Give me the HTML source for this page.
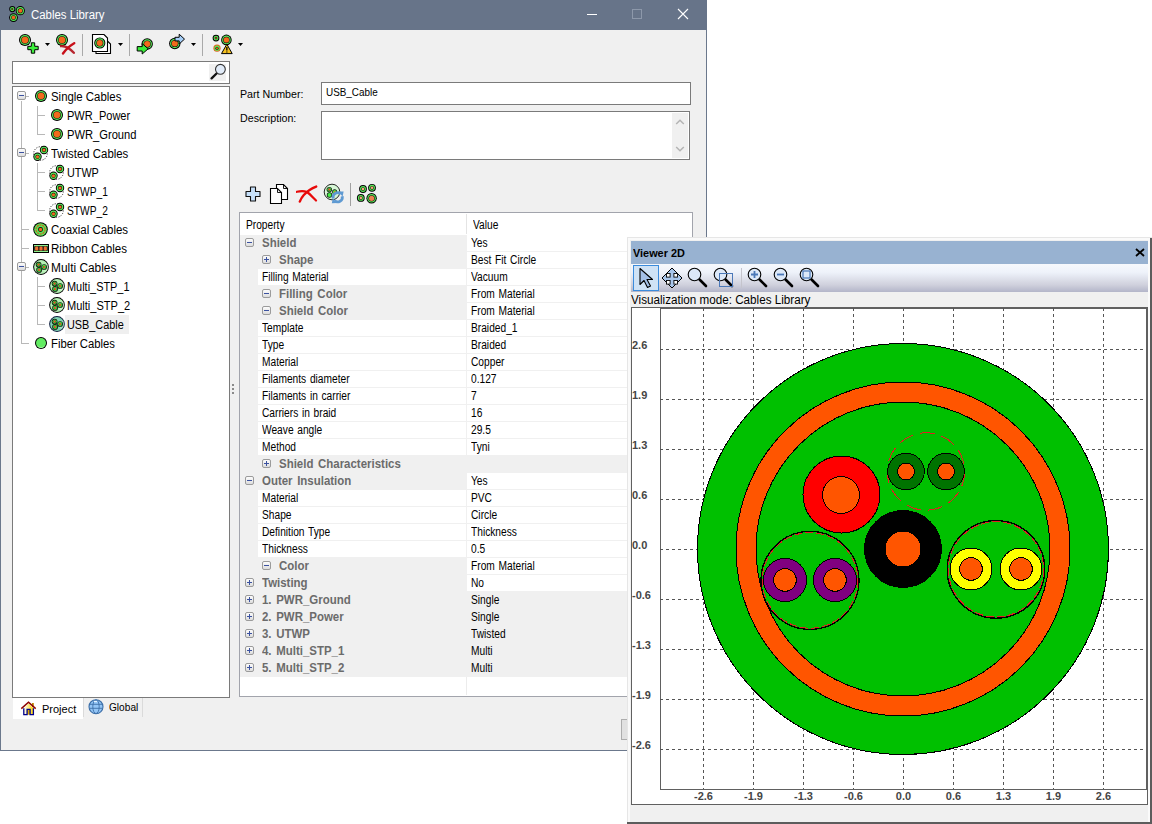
<!DOCTYPE html><html><head><meta charset="utf-8"><title>Cables Library</title><style>
html,body{margin:0;padding:0} body{width:1152px;height:824px;position:relative;overflow:hidden;background:#fff;font-family:"Liberation Sans", sans-serif}
</style></head><body>
<div style="position:absolute;left:0px;top:30px;width:707px;height:721px;background:#6b788c;"></div>
<div style="position:absolute;left:1px;top:30px;width:705px;height:720px;background:#f0f0f0;"></div>
<div style="position:absolute;left:0px;top:0px;width:707px;height:30px;background:#677489;"></div>
<svg style="position:absolute;left:8px;top:5px" width="18" height="18" viewBox="0 0 18 18"><circle cx="4.3" cy="4.1" r="3.1" fill="#000"/><circle cx="4.3" cy="4.1" r="2.15" fill="#58ea58"/><circle cx="4.3" cy="4.1" r="1.05" fill="#111"/><circle cx="4.3" cy="4.1" r="0.50" fill="#f26a1b"/><circle cx="12.3" cy="5.7" r="4.6" fill="#000"/><circle cx="12.3" cy="5.7" r="3.65" fill="#58ea58"/><circle cx="12.3" cy="5.7" r="2.55" fill="#111"/><circle cx="12.3" cy="5.7" r="2.00" fill="#f26a1b"/><circle cx="5.5" cy="12.6" r="4.4" fill="#000"/><circle cx="5.5" cy="12.6" r="3.45" fill="#58ea58"/><circle cx="5.5" cy="12.6" r="2.35" fill="#111"/><circle cx="5.5" cy="12.6" r="1.80" fill="#f26a1b"/></svg>
<div style="position:absolute;left:30.5px;top:9.24px;font-size:12px;line-height:12px;color:#fff;font-weight:normal;white-space:nowrap;transform:scaleX(0.95);transform-origin:0 0;">Cables Library</div>
<div style="position:absolute;left:587px;top:14px;width:10px;height:1px;background:#fff;"></div>
<div style="position:absolute;left:632px;top:9px;width:8px;height:8px;border:1px solid #8d98aa"></div>
<svg style="position:absolute;left:677px;top:8px" width="12" height="12" viewBox="0 0 12 12"><path d="M1 1L11 11M11 1L1 11" stroke="#fff" stroke-width="1.1"/></svg>
<svg style="position:absolute;left:19px;top:34px" width="12" height="12" viewBox="0 0 12 12"><circle cx="6" cy="6" r="6" fill="#000"/><circle cx="6" cy="6" r="5.05" fill="#58ea58"/><circle cx="6" cy="6" r="3.85" fill="#111"/><circle cx="6" cy="6" r="3.30" fill="#f26a1b"/></svg>
<svg style="position:absolute;left:27px;top:42px" width="12" height="12" viewBox="0 0 12 12"><path d="M4.3 0.8h3.4v3.5h3.5v3.4H7.7v3.5H4.3V7.7H0.8V4.3h3.5z" fill="#3cf03c" stroke="#000" stroke-width="1" stroke-linejoin="round"/></svg>
<svg style="position:absolute;left:45px;top:43px" width="5" height="3" viewBox="0 0 5 3"><path d="M0 0H5L2.5 3z" fill="#000"/></svg>
<svg style="position:absolute;left:56px;top:34px" width="12" height="12" viewBox="0 0 12 12"><circle cx="6" cy="6" r="6" fill="#000"/><circle cx="6" cy="6" r="5.05" fill="#58ea58"/><circle cx="6" cy="6" r="3.85" fill="#111"/><circle cx="6" cy="6" r="3.30" fill="#f26a1b"/></svg>
<svg style="position:absolute;left:60px;top:42px" width="16" height="13" viewBox="0 0 16 13"><path d="M0.5 4C5 3.5 9 5.5 13.8 10.8" stroke="#b0101a" stroke-width="2.4" fill="none" stroke-linecap="round" opacity="0.9"/><path d="M14.2 1.2C10 3.5 6.5 6.5 3 11.5" stroke="#c8101a" stroke-width="2.4" fill="none" stroke-linecap="round"/></svg>
<div style="position:absolute;left:82px;top:34px;width:1px;height:22px;background:#a9a9a9;"></div>
<svg style="position:absolute;left:91px;top:34px" width="21" height="21" viewBox="0 0 21 21"><path d="M5 3.5h8l6.5 6.5v9.5H5z" fill="#fff" stroke="#000" stroke-width="1.1"/><path d="M1.5 0.5h11.5l3.5 3.5v13.5h-15z" fill="#fff" stroke="#000" stroke-width="1.1"/><circle cx="8.8" cy="9" r="5.6" fill="#000"/><circle cx="8.8" cy="9" r="4.65" fill="#58ea58"/><circle cx="8.8" cy="9" r="3.53" fill="#111"/><circle cx="8.8" cy="9" r="2.98" fill="#f26a1b"/></svg>
<svg style="position:absolute;left:118px;top:43px" width="5" height="3" viewBox="0 0 5 3"><path d="M0 0H5L2.5 3z" fill="#000"/></svg>
<div style="position:absolute;left:129px;top:34px;width:1px;height:22px;background:#a9a9a9;"></div>
<svg style="position:absolute;left:136px;top:34px" width="20" height="22" viewBox="0 0 20 22"><circle cx="11.2" cy="10" r="5.7" fill="#000"/><circle cx="11.2" cy="10" r="4.75" fill="#58ea58"/><circle cx="11.2" cy="10" r="3.61" fill="#111"/><circle cx="11.2" cy="10" r="3.06" fill="#f26a1b"/><path d="M1.2 12.6h5v-3l6 5.2-6 5.2v-3h-5z" fill="#38ec38" stroke="#000" stroke-width="1" stroke-linejoin="round"/></svg>
<svg style="position:absolute;left:168px;top:33px" width="20" height="20" viewBox="0 0 20 20"><circle cx="6.8" cy="10.5" r="5.7" fill="#000"/><circle cx="6.8" cy="10.5" r="4.75" fill="#58ea58"/><circle cx="6.8" cy="10.5" r="3.61" fill="#111"/><circle cx="6.8" cy="10.5" r="3.06" fill="#f26a1b"/><path d="M7 4.3h4.2V1.2l5.3 4.9-5.3 4.9V7.9H7z" fill="#a4cdf6" stroke="#000" stroke-width="1" stroke-linejoin="round"/></svg>
<svg style="position:absolute;left:191px;top:43px" width="5" height="3" viewBox="0 0 5 3"><path d="M0 0H5L2.5 3z" fill="#000"/></svg>
<div style="position:absolute;left:202px;top:34px;width:1px;height:22px;background:#a9a9a9;"></div>
<svg style="position:absolute;left:211px;top:33px" width="22" height="22" viewBox="0 0 22 22"><circle cx="5" cy="5.1" r="3.4" fill="#000"/><circle cx="5" cy="5.1" r="2.45" fill="#58ea58"/><circle cx="5" cy="5.1" r="1.35" fill="#111"/><circle cx="5" cy="5.1" r="0.80" fill="#f26a1b"/><circle cx="6" cy="15.2" r="3.6" fill="#e0601a"/><circle cx="6" cy="15.2" r="2.65" fill="#58ea58"/><circle cx="6" cy="15.2" r="1.55" fill="#111"/><circle cx="6" cy="15.2" r="1.00" fill="#f26a1b"/><circle cx="15.4" cy="6.9" r="5.3" fill="#000"/><circle cx="15.4" cy="6.9" r="4.35" fill="#58ea58"/><circle cx="15.4" cy="6.9" r="3.25" fill="#111"/><circle cx="15.4" cy="6.9" r="2.70" fill="#f26a1b"/><path d="M15.85 11.2L21.2 20.6H10.5z" fill="#f5c020" stroke="#000" stroke-width="1" stroke-linejoin="round"/><path d="M15.85 14v3.4M15.85 18.4v1" stroke="#000" stroke-width="1.3"/></svg>
<svg style="position:absolute;left:238px;top:43px" width="5" height="3" viewBox="0 0 5 3"><path d="M0 0H5L2.5 3z" fill="#000"/></svg>
<div style="position:absolute;left:12px;top:61px;width:216px;height:21px;border:1px solid #7a7a7a;background:#fff"></div>
<div style="position:absolute;left:209px;top:64px;width:17px;height:17px;background:#f0f0f0;"></div>
<svg style="position:absolute;left:209px;top:62px" width="18" height="18" viewBox="0 0 18 18"><path d="M2.6 16.4L7.8 11.2" stroke="#111" stroke-width="2.3" stroke-linecap="round"/><circle cx="11.4" cy="7.3" r="4.9" fill="#e2ecf9" stroke="#333" stroke-width="1.1"/></svg>
<div style="position:absolute;left:12px;top:86px;width:216px;height:610px;border:1px solid #7a7a7a;background:#fff"></div>
<div style="position:absolute;left:21px;top:101px;width:1px;height:243px;background:#b8b8b8;"></div>
<div style="position:absolute;left:26px;top:96px;width:3px;height:1px;background:#b8b8b8;"></div>
<div style="position:absolute;left:26px;top:153px;width:3px;height:1px;background:#b8b8b8;"></div>
<div style="position:absolute;left:26px;top:267px;width:3px;height:1px;background:#b8b8b8;"></div>
<div style="position:absolute;left:22px;top:229px;width:7px;height:1px;background:#b8b8b8;"></div>
<div style="position:absolute;left:22px;top:248px;width:7px;height:1px;background:#b8b8b8;"></div>
<div style="position:absolute;left:22px;top:343px;width:7px;height:1px;background:#b8b8b8;"></div>
<div style="position:absolute;left:37px;top:106px;width:1px;height:29px;background:#b8b8b8;"></div>
<div style="position:absolute;left:38px;top:115px;width:7px;height:1px;background:#b8b8b8;"></div>
<div style="position:absolute;left:38px;top:134px;width:7px;height:1px;background:#b8b8b8;"></div>
<div style="position:absolute;left:37px;top:163px;width:1px;height:48px;background:#b8b8b8;"></div>
<div style="position:absolute;left:38px;top:172px;width:7px;height:1px;background:#b8b8b8;"></div>
<div style="position:absolute;left:38px;top:191px;width:7px;height:1px;background:#b8b8b8;"></div>
<div style="position:absolute;left:38px;top:210px;width:7px;height:1px;background:#b8b8b8;"></div>
<div style="position:absolute;left:37px;top:277px;width:1px;height:48px;background:#b8b8b8;"></div>
<div style="position:absolute;left:38px;top:286px;width:7px;height:1px;background:#b8b8b8;"></div>
<div style="position:absolute;left:38px;top:305px;width:7px;height:1px;background:#b8b8b8;"></div>
<div style="position:absolute;left:38px;top:324px;width:7px;height:1px;background:#b8b8b8;"></div>
<div style="position:absolute;left:17px;top:91px;width:7px;height:7px;border:1px solid #9b9b9b;border-radius:2px;background:linear-gradient(#fcfcfc,#dcdcdc)"><div style="position:absolute;left:1px;top:3px;width:5px;height:1px;background:#3b52a0"></div></div>
<div style="position:absolute;left:17px;top:148px;width:7px;height:7px;border:1px solid #9b9b9b;border-radius:2px;background:linear-gradient(#fcfcfc,#dcdcdc)"><div style="position:absolute;left:1px;top:3px;width:5px;height:1px;background:#3b52a0"></div></div>
<div style="position:absolute;left:17px;top:262px;width:7px;height:7px;border:1px solid #9b9b9b;border-radius:2px;background:linear-gradient(#fcfcfc,#dcdcdc)"><div style="position:absolute;left:1px;top:3px;width:5px;height:1px;background:#3b52a0"></div></div>
<svg style="position:absolute;left:35px;top:90px" width="12" height="12" viewBox="0 0 12 12"><circle cx="6" cy="6" r="6" fill="#000"/><circle cx="6" cy="6" r="5.05" fill="#58ea58"/><circle cx="6" cy="6" r="3.85" fill="#111"/><circle cx="6" cy="6" r="3.30" fill="#f26a1b"/></svg>
<div style="position:absolute;left:51px;top:91.24px;font-size:12px;line-height:12px;color:#000;font-weight:normal;white-space:nowrap;transform:scaleX(0.95);transform-origin:0 0;">Single Cables</div>
<svg style="position:absolute;left:51px;top:109px" width="12" height="12" viewBox="0 0 12 12"><circle cx="6" cy="6" r="6" fill="#000"/><circle cx="6" cy="6" r="5.05" fill="#58ea58"/><circle cx="6" cy="6" r="3.85" fill="#111"/><circle cx="6" cy="6" r="3.30" fill="#f26a1b"/></svg>
<div style="position:absolute;left:67px;top:110.24px;font-size:12px;line-height:12px;color:#000;font-weight:normal;white-space:nowrap;transform:scaleX(0.92);transform-origin:0 0;">PWR_Power</div>
<svg style="position:absolute;left:51px;top:128px" width="12" height="12" viewBox="0 0 12 12"><circle cx="6" cy="6" r="6" fill="#000"/><circle cx="6" cy="6" r="5.05" fill="#58ea58"/><circle cx="6" cy="6" r="3.85" fill="#111"/><circle cx="6" cy="6" r="3.30" fill="#f26a1b"/></svg>
<div style="position:absolute;left:67px;top:129.24px;font-size:12px;line-height:12px;color:#000;font-weight:normal;white-space:nowrap;transform:scaleX(0.93);transform-origin:0 0;">PWR_Ground</div>
<svg style="position:absolute;left:33px;top:145px" width="17" height="17" viewBox="0 0 17 17"><circle cx="7.5" cy="8.5" r="6.8" fill="none" stroke="#000" stroke-width="0.9" stroke-dasharray="1 1.5"/><circle cx="11" cy="5" r="4.2" fill="#000"/><circle cx="11" cy="5" r="3.25" fill="#58ea58"/><circle cx="11" cy="5" r="2.15" fill="#111"/><circle cx="11" cy="5" r="1.60" fill="#f26a1b"/><circle cx="4.5" cy="11.8" r="4.2" fill="#000"/><circle cx="4.5" cy="11.8" r="3.25" fill="#58ea58"/><circle cx="4.5" cy="11.8" r="2.15" fill="#111"/><circle cx="4.5" cy="11.8" r="1.60" fill="#f26a1b"/></svg>
<div style="position:absolute;left:51px;top:148.24px;font-size:12px;line-height:12px;color:#000;font-weight:normal;white-space:nowrap;transform:scaleX(0.95);transform-origin:0 0;">Twisted Cables</div>
<svg style="position:absolute;left:49px;top:164px" width="17" height="17" viewBox="0 0 17 17"><circle cx="7.5" cy="8.5" r="6.8" fill="none" stroke="#000" stroke-width="0.9" stroke-dasharray="1 1.5"/><circle cx="11" cy="5" r="4.2" fill="#000"/><circle cx="11" cy="5" r="3.25" fill="#58ea58"/><circle cx="11" cy="5" r="2.15" fill="#111"/><circle cx="11" cy="5" r="1.60" fill="#f26a1b"/><circle cx="4.5" cy="11.8" r="4.2" fill="#000"/><circle cx="4.5" cy="11.8" r="3.25" fill="#58ea58"/><circle cx="4.5" cy="11.8" r="2.15" fill="#111"/><circle cx="4.5" cy="11.8" r="1.60" fill="#f26a1b"/></svg>
<div style="position:absolute;left:67px;top:167.24px;font-size:12px;line-height:12px;color:#000;font-weight:normal;white-space:nowrap;transform:scaleX(0.9);transform-origin:0 0;">UTWP</div>
<svg style="position:absolute;left:49px;top:183px" width="17" height="17" viewBox="0 0 17 17"><circle cx="7.5" cy="8.5" r="6.8" fill="none" stroke="#000" stroke-width="0.9" stroke-dasharray="1 1.5"/><circle cx="11" cy="5" r="4.2" fill="#000"/><circle cx="11" cy="5" r="3.25" fill="#58ea58"/><circle cx="11" cy="5" r="2.15" fill="#111"/><circle cx="11" cy="5" r="1.60" fill="#f26a1b"/><circle cx="4.5" cy="11.8" r="4.2" fill="#000"/><circle cx="4.5" cy="11.8" r="3.25" fill="#58ea58"/><circle cx="4.5" cy="11.8" r="2.15" fill="#111"/><circle cx="4.5" cy="11.8" r="1.60" fill="#f26a1b"/></svg>
<div style="position:absolute;left:67px;top:186.24px;font-size:12px;line-height:12px;color:#000;font-weight:normal;white-space:nowrap;transform:scaleX(0.85);transform-origin:0 0;">STWP_1</div>
<svg style="position:absolute;left:49px;top:202px" width="17" height="17" viewBox="0 0 17 17"><circle cx="7.5" cy="8.5" r="6.8" fill="none" stroke="#000" stroke-width="0.9" stroke-dasharray="1 1.5"/><circle cx="11" cy="5" r="4.2" fill="#000"/><circle cx="11" cy="5" r="3.25" fill="#58ea58"/><circle cx="11" cy="5" r="2.15" fill="#111"/><circle cx="11" cy="5" r="1.60" fill="#f26a1b"/><circle cx="4.5" cy="11.8" r="4.2" fill="#000"/><circle cx="4.5" cy="11.8" r="3.25" fill="#58ea58"/><circle cx="4.5" cy="11.8" r="2.15" fill="#111"/><circle cx="4.5" cy="11.8" r="1.60" fill="#f26a1b"/></svg>
<div style="position:absolute;left:67px;top:205.24px;font-size:12px;line-height:12px;color:#000;font-weight:normal;white-space:nowrap;transform:scaleX(0.85);transform-origin:0 0;">STWP_2</div>
<svg style="position:absolute;left:33px;top:222px" width="15" height="15" viewBox="0 0 15 15"><circle cx="7.5" cy="7.5" r="7.3" fill="#000"/><circle cx="7.5" cy="7.5" r="6.3" fill="#5ae85a"/><circle cx="7.5" cy="7.5" r="4.5" fill="none" stroke="#d4561a" stroke-width="1.1" stroke-dasharray="2 0.8"/><circle cx="7.5" cy="7.5" r="2.4" fill="#000"/><circle cx="7.5" cy="7.5" r="1.7" fill="#f26a1b"/></svg>
<div style="position:absolute;left:51px;top:224.24px;font-size:12px;line-height:12px;color:#000;font-weight:normal;white-space:nowrap;transform:scaleX(0.955);transform-origin:0 0;">Coaxial Cables</div>
<svg style="position:absolute;left:33px;top:244px" width="16" height="9" viewBox="0 0 16 9"><rect x="0" y="0" width="16" height="9" fill="#000"/><rect x="1" y="1" width="14" height="7" fill="#8ef08e"/><rect x="1.2" y="2.2" width="13.6" height="4.6" fill="#111"/><rect x="2.1" y="2.6" width="3.2" height="3.8" rx="1.2" fill="#f07030"/><rect x="6.4" y="2.6" width="3.2" height="3.8" rx="1.2" fill="#f07030"/><rect x="10.7" y="2.6" width="3.2" height="3.8" rx="1.2" fill="#f07030"/></svg>
<div style="position:absolute;left:51px;top:243.24px;font-size:12px;line-height:12px;color:#000;font-weight:normal;white-space:nowrap;transform:scaleX(0.965);transform-origin:0 0;">Ribbon Cables</div>
<svg style="position:absolute;left:33px;top:259px" width="16" height="16" viewBox="0 0 16 16"><circle cx="8" cy="8" r="7.9" fill="#000"/><circle cx="8" cy="8" r="6.9" fill="#b4f0b4"/><path d="M8 8L14.5 4.5A6.9 6.9 0 0 1 12 13.6z" fill="#ffffff" opacity="0.25"/><circle cx="5.6" cy="5.6" r="2.85" fill="#0b0b0b"/><circle cx="5.6" cy="5.6" r="2.15" fill="#44ee44"/><circle cx="5.6" cy="5.6" r="1.35" fill="#2a4a2a"/><circle cx="5.6" cy="5.6" r="1.05" fill="#f4602a"/><circle cx="6.1" cy="10.9" r="2.85" fill="#0b0b0b"/><circle cx="6.1" cy="10.9" r="2.15" fill="#44ee44"/><circle cx="6.1" cy="10.9" r="1.35" fill="#2a4a2a"/><circle cx="6.1" cy="10.9" r="1.05" fill="#f4602a"/><circle cx="11.1" cy="8.0" r="2.85" fill="#0b0b0b"/><circle cx="11.1" cy="8.0" r="2.15" fill="#44ee44"/><circle cx="11.1" cy="8.0" r="1.35" fill="#2a4a2a"/><circle cx="11.1" cy="8.0" r="1.05" fill="#f4602a"/></svg>
<div style="position:absolute;left:51px;top:262.24px;font-size:12px;line-height:12px;color:#000;font-weight:normal;white-space:nowrap;transform:scaleX(0.99);transform-origin:0 0;">Multi Cables</div>
<svg style="position:absolute;left:49px;top:278px" width="16" height="16" viewBox="0 0 16 16"><circle cx="8" cy="8" r="7.9" fill="#000"/><circle cx="8" cy="8" r="6.9" fill="#b4f0b4"/><path d="M8 8L14.5 4.5A6.9 6.9 0 0 1 12 13.6z" fill="#ffffff" opacity="0.25"/><circle cx="5.6" cy="5.6" r="2.85" fill="#0b0b0b"/><circle cx="5.6" cy="5.6" r="2.15" fill="#44ee44"/><circle cx="5.6" cy="5.6" r="1.35" fill="#2a4a2a"/><circle cx="5.6" cy="5.6" r="1.05" fill="#f4602a"/><circle cx="6.1" cy="10.9" r="2.85" fill="#0b0b0b"/><circle cx="6.1" cy="10.9" r="2.15" fill="#44ee44"/><circle cx="6.1" cy="10.9" r="1.35" fill="#2a4a2a"/><circle cx="6.1" cy="10.9" r="1.05" fill="#f4602a"/><circle cx="11.1" cy="8.0" r="2.85" fill="#0b0b0b"/><circle cx="11.1" cy="8.0" r="2.15" fill="#44ee44"/><circle cx="11.1" cy="8.0" r="1.35" fill="#2a4a2a"/><circle cx="11.1" cy="8.0" r="1.05" fill="#f4602a"/></svg>
<div style="position:absolute;left:67px;top:281.24px;font-size:12px;line-height:12px;color:#000;font-weight:normal;white-space:nowrap;transform:scaleX(0.91);transform-origin:0 0;">Multi_STP_1</div>
<svg style="position:absolute;left:49px;top:297px" width="16" height="16" viewBox="0 0 16 16"><circle cx="8" cy="8" r="7.9" fill="#000"/><circle cx="8" cy="8" r="6.9" fill="#b4f0b4"/><path d="M8 8L14.5 4.5A6.9 6.9 0 0 1 12 13.6z" fill="#ffffff" opacity="0.25"/><circle cx="5.6" cy="5.6" r="2.85" fill="#0b0b0b"/><circle cx="5.6" cy="5.6" r="2.15" fill="#44ee44"/><circle cx="5.6" cy="5.6" r="1.35" fill="#2a4a2a"/><circle cx="5.6" cy="5.6" r="1.05" fill="#f4602a"/><circle cx="6.1" cy="10.9" r="2.85" fill="#0b0b0b"/><circle cx="6.1" cy="10.9" r="2.15" fill="#44ee44"/><circle cx="6.1" cy="10.9" r="1.35" fill="#2a4a2a"/><circle cx="6.1" cy="10.9" r="1.05" fill="#f4602a"/><circle cx="11.1" cy="8.0" r="2.85" fill="#0b0b0b"/><circle cx="11.1" cy="8.0" r="2.15" fill="#44ee44"/><circle cx="11.1" cy="8.0" r="1.35" fill="#2a4a2a"/><circle cx="11.1" cy="8.0" r="1.05" fill="#f4602a"/></svg>
<div style="position:absolute;left:67px;top:300.24px;font-size:12px;line-height:12px;color:#000;font-weight:normal;white-space:nowrap;transform:scaleX(0.92);transform-origin:0 0;">Multi_STP_2</div>
<div style="position:absolute;left:65px;top:315px;width:64px;height:19px;background:#efefef;"></div>
<svg style="position:absolute;left:49px;top:316px" width="16" height="16" viewBox="0 0 16 16"><circle cx="8" cy="8" r="7.9" fill="#0c1c3c"/><circle cx="8" cy="8" r="6.9" fill="#80d4b4"/><path d="M8 8L14.5 4.5A6.9 6.9 0 0 1 12 13.6z" fill="#ffffff" opacity="0.25"/><circle cx="5.6" cy="5.6" r="2.85" fill="#0b0b0b"/><circle cx="5.6" cy="5.6" r="2.15" fill="#44ee44"/><circle cx="5.6" cy="5.6" r="1.35" fill="#2a4a2a"/><circle cx="5.6" cy="5.6" r="1.05" fill="#f4602a"/><circle cx="6.1" cy="10.9" r="2.85" fill="#0b0b0b"/><circle cx="6.1" cy="10.9" r="2.15" fill="#44ee44"/><circle cx="6.1" cy="10.9" r="1.35" fill="#2a4a2a"/><circle cx="6.1" cy="10.9" r="1.05" fill="#f4602a"/><circle cx="11.1" cy="8.0" r="2.85" fill="#0b0b0b"/><circle cx="11.1" cy="8.0" r="2.15" fill="#44ee44"/><circle cx="11.1" cy="8.0" r="1.35" fill="#2a4a2a"/><circle cx="11.1" cy="8.0" r="1.05" fill="#f4602a"/></svg>
<div style="position:absolute;left:67px;top:319.24px;font-size:12px;line-height:12px;color:#000;font-weight:normal;white-space:nowrap;transform:scaleX(0.905);transform-origin:0 0;">USB_Cable</div>
<svg style="position:absolute;left:35px;top:337px" width="12" height="12" viewBox="0 0 12 12"><circle cx="6" cy="6" r="6" fill="#000"/><circle cx="6" cy="6" r="5.0" fill="#62ec62"/><path d="M2.5 9A4.6 4.6 0 0 0 9.5 9" stroke="#9af49a" stroke-width="1" fill="none"/></svg>
<div style="position:absolute;left:51px;top:338.24px;font-size:12px;line-height:12px;color:#000;font-weight:normal;white-space:nowrap;transform:scaleX(0.94);transform-origin:0 0;">Fiber Cables</div>
<div style="position:absolute;left:13px;top:698px;width:70px;height:21px;background:#fff;"></div>
<div style="position:absolute;left:83px;top:698px;width:1px;height:19px;background:#dadada;"></div>
<div style="position:absolute;left:142px;top:698px;width:1px;height:19px;background:#dadada;"></div>
<svg style="position:absolute;left:16px;top:696px" width="24" height="22" viewBox="0 0 24 22"><defs><linearGradient id="hg" x1="0" x2="1"><stop offset="0" stop-color="#ffffff"/><stop offset="1" stop-color="#ffd400"/></linearGradient></defs><path d="M7.6 12.5L12.5 7.2 17.4 12.5V18.6H7.6z" fill="url(#hg)"/><rect x="16" y="7" width="1.8" height="4.2" fill="#c08800"/><path d="M11.3 18.6v-4.6h2.6v4.6" fill="#e0a800"/><path d="M7.8 12.2v6.5h3.3v-5.3h3v5.3h3.3v-6.5" stroke="#00008c" stroke-width="1.3" fill="none"/><path d="M5.3 12.6L12.5 6.3 19.7 12.6" stroke="#8c0000" stroke-width="1.4" fill="none"/></svg>
<div style="position:absolute;left:42px;top:704.09px;font-size:11px;line-height:11px;color:#000;font-weight:normal;white-space:nowrap;">Project</div>
<svg style="position:absolute;left:88px;top:699px" width="16" height="16" viewBox="0 0 16 16"><circle cx="8" cy="7.7" r="7" fill="#94c6f6" stroke="#3d6fa8" stroke-width="1.1"/><ellipse cx="8" cy="7.7" rx="3.2" ry="6.8" fill="none" stroke="#3d6fa8" stroke-width="0.9"/><path d="M2 5.3h12M1.5 9.3h13" stroke="#3d6fa8" stroke-width="0.9"/><path d="M6 2.5h3" stroke="#e8f4ff" stroke-width="1.2"/></svg>
<div style="position:absolute;left:109px;top:702.09px;font-size:11px;line-height:11px;color:#000;font-weight:normal;white-space:nowrap;transform:scaleX(0.92);transform-origin:0 0;">Global</div>
<div style="position:absolute;left:232px;top:384px;width:2px;height:2px;background:#8a8a8a;"></div>
<div style="position:absolute;left:232px;top:388px;width:2px;height:2px;background:#8a8a8a;"></div>
<div style="position:absolute;left:232px;top:392px;width:2px;height:2px;background:#8a8a8a;"></div>
<div style="position:absolute;left:240px;top:89.09px;font-size:11px;line-height:11px;color:#000;font-weight:normal;white-space:nowrap;transform:scaleX(0.97);transform-origin:0 0;">Part Number:</div>
<div style="position:absolute;left:240px;top:113.09px;font-size:11px;line-height:11px;color:#000;font-weight:normal;white-space:nowrap;transform:scaleX(0.97);transform-origin:0 0;">Description:</div>
<div style="position:absolute;left:321px;top:82px;width:368px;height:21px;border:1px solid #7a7a7a;background:#fff"></div>
<div style="position:absolute;left:326px;top:87.09px;font-size:11px;line-height:11px;color:#000;font-weight:normal;white-space:nowrap;transform:scaleX(0.9);transform-origin:0 0;">USB_Cable</div>
<div style="position:absolute;left:321px;top:111px;width:367px;height:47px;border:1px solid #7a7a7a;background:#fff"></div>
<div style="position:absolute;left:672px;top:113px;width:16px;height:45px;background:#f0f0f0;"></div>
<svg style="position:absolute;left:675px;top:118px" width="10" height="8" viewBox="0 0 10 8"><path d="M1.2 6L5 2.2L8.8 6" stroke="#b4b4b4" stroke-width="1.5" fill="none"/></svg>
<svg style="position:absolute;left:675px;top:145px" width="10" height="8" viewBox="0 0 10 8"><path d="M1.2 2L5 5.8L8.8 2" stroke="#b4b4b4" stroke-width="1.5" fill="none"/></svg>
<svg style="position:absolute;left:245px;top:186px" width="16" height="16" viewBox="0 0 16 16"><path d="M5.5 1h5v4.5H15v5h-4.5V15h-5v-4.5H1v-5h4.5z" fill="#c6e0fa" stroke="#111" stroke-width="1.1" stroke-linejoin="round"/></svg>
<svg style="position:absolute;left:269px;top:183px" width="22" height="21" viewBox="0 0 22 21"><path d="M7.5 1.5h7l4 4v11h-11z" fill="#fff" stroke="#000" stroke-width="1.1"/><path d="M14.5 1.5v4h4" fill="none" stroke="#000" stroke-width="0.9"/><path d="M1.5 5.5h7l4 4v11h-11z" fill="#fff" stroke="#000" stroke-width="1.1"/><path d="M8.5 5.5v4h4" fill="none" stroke="#000" stroke-width="0.9"/></svg>
<svg style="position:absolute;left:296px;top:185px" width="22" height="18" viewBox="0 0 22 18"><path d="M0.8 6.8C5 5.8 8.5 6 11 7C14 9 17 12.5 20 15.5" stroke="#e80a0a" stroke-width="2.2" fill="none" stroke-linecap="round"/><path d="M20.2 1.6C15 3.5 11 6.5 7.8 10C6 12 4.8 14 3.8 16.6" stroke="#e80a0a" stroke-width="2.4" fill="none" stroke-linecap="round"/></svg>
<svg style="position:absolute;left:323px;top:183px" width="22" height="22" viewBox="0 0 22 22"><circle cx="9" cy="9" r="7.8" fill="#d6f6d6" stroke="#111" stroke-width="0.9"/><circle cx="6.3" cy="6.6" r="2.7" fill="#111"/><circle cx="6.3" cy="6.6" r="2.05" fill="#44ee44"/><circle cx="6.3" cy="6.6" r="1.3" fill="#2a4a2a"/><circle cx="6.3" cy="6.6" r="1" fill="#f4602a"/><circle cx="6.5" cy="12" r="2.7" fill="#111"/><circle cx="6.5" cy="12" r="2.05" fill="#44ee44"/><circle cx="11.6" cy="8.8" r="2.5" fill="#111"/><circle cx="11.6" cy="8.8" r="1.9" fill="#44ee44"/><circle cx="11.6" cy="8.8" r="0.9" fill="#f4602a"/><path d="M10.2 15.5A4.6 4.6 0 0 1 17.8 11" stroke="#5f9ad2" stroke-width="2.8" fill="none"/><path d="M15.2 8.6L20.6 8.4 19.6 13.4z" fill="#5f9ad2"/><path d="M19.2 13.2A4.6 4.6 0 0 1 11.6 17.6" stroke="#5f9ad2" stroke-width="2.8" fill="none"/><path d="M14.2 20L8.8 20.2 9.8 15.2z" fill="#5f9ad2"/></svg>
<div style="position:absolute;left:350px;top:183px;width:1px;height:23px;background:#a0a0a0;"></div>
<svg style="position:absolute;left:356px;top:182px" width="22" height="22" viewBox="0 0 22 22"><circle cx="7" cy="7" r="3.9" fill="#000"/><circle cx="7" cy="7" r="2.95" fill="#58ea58"/><circle cx="7" cy="7" r="1.85" fill="#111"/><circle cx="7" cy="7" r="1.30" fill="#f8a878"/><circle cx="16" cy="5.8" r="3.9" fill="#000"/><circle cx="16" cy="5.8" r="2.95" fill="#58ea58"/><circle cx="16" cy="5.8" r="1.85" fill="#111"/><circle cx="16" cy="5.8" r="1.30" fill="#f8a878"/><circle cx="4.8" cy="15.9" r="3.9" fill="#000"/><circle cx="4.8" cy="15.9" r="2.95" fill="#58ea58"/><circle cx="4.8" cy="15.9" r="1.85" fill="#111"/><circle cx="4.8" cy="15.9" r="1.30" fill="#f8a878"/><circle cx="15.6" cy="16.3" r="5.2" fill="#000"/><circle cx="15.6" cy="16.3" r="4.25" fill="#58ea58"/><circle cx="15.6" cy="16.3" r="3.15" fill="#111"/><circle cx="15.6" cy="16.3" r="2.60" fill="#f08050"/></svg>
<div style="position:absolute;left:239px;top:212px;width:452px;height:483px;border:1px solid #a2a4ac;background:#fff"></div>
<div style="position:absolute;left:246px;top:219.24px;font-size:12px;line-height:12px;color:#000;font-weight:normal;white-space:nowrap;transform:scaleX(0.85);transform-origin:0 0;word-spacing:1px">Property</div>
<div style="position:absolute;left:466px;top:214px;width:1px;height:20px;background:#e4e4e4;"></div>
<div style="position:absolute;left:473px;top:219.24px;font-size:12px;line-height:12px;color:#000;font-weight:normal;white-space:nowrap;transform:scaleX(0.85);transform-origin:0 0;word-spacing:1px">Value</div>
<div style="position:absolute;left:240px;top:235px;width:452px;height:442px;background:#f0f0f0;"></div>
<div style="position:absolute;left:467px;top:235px;width:225px;height:16px;background:#fff;"></div>
<div style="position:absolute;left:245px;top:238px;width:7px;height:7px;border:1px solid #9b9b9b;border-radius:2px;background:linear-gradient(#fcfcfc,#dcdcdc)"><div style="position:absolute;left:1px;top:3px;width:5px;height:1px;background:#3b52a0"></div></div>
<div style="position:absolute;left:262px;top:237.24px;font-size:12px;line-height:12px;color:#6b6b6b;font-weight:bold;white-space:nowrap;transform:scaleX(0.955);transform-origin:0 0;word-spacing:1.5px">Shield</div>
<div style="position:absolute;left:471px;top:237.24px;font-size:12px;line-height:12px;color:#000;font-weight:normal;white-space:nowrap;transform:scaleX(0.85);transform-origin:0 0;word-spacing:1px">Yes</div>
<div style="position:absolute;left:467px;top:252px;width:225px;height:16px;background:#fff;"></div>
<div style="position:absolute;left:262px;top:255px;width:7px;height:7px;border:1px solid #9b9b9b;border-radius:2px;background:linear-gradient(#fcfcfc,#dcdcdc)"><div style="position:absolute;left:1px;top:3px;width:5px;height:1px;background:#3b52a0"></div><div style="position:absolute;left:3px;top:1px;width:1px;height:5px;background:#3b52a0"></div></div>
<div style="position:absolute;left:279px;top:254.24px;font-size:12px;line-height:12px;color:#6b6b6b;font-weight:bold;white-space:nowrap;transform:scaleX(0.955);transform-origin:0 0;word-spacing:1.5px">Shape</div>
<div style="position:absolute;left:471px;top:254.24px;font-size:12px;line-height:12px;color:#000;font-weight:normal;white-space:nowrap;transform:scaleX(0.85);transform-origin:0 0;word-spacing:1px">Best Fit Circle</div>
<div style="position:absolute;left:258px;top:269px;width:208px;height:16px;background:#fff;"></div>
<div style="position:absolute;left:467px;top:269px;width:225px;height:16px;background:#fff;"></div>
<div style="position:absolute;left:262px;top:271.24px;font-size:12px;line-height:12px;color:#000;font-weight:normal;white-space:nowrap;transform:scaleX(0.85);transform-origin:0 0;word-spacing:1px">Filling Material</div>
<div style="position:absolute;left:471px;top:271.24px;font-size:12px;line-height:12px;color:#000;font-weight:normal;white-space:nowrap;transform:scaleX(0.85);transform-origin:0 0;word-spacing:1px">Vacuum</div>
<div style="position:absolute;left:467px;top:286px;width:225px;height:16px;background:#fff;"></div>
<div style="position:absolute;left:262px;top:289px;width:7px;height:7px;border:1px solid #9b9b9b;border-radius:2px;background:linear-gradient(#fcfcfc,#dcdcdc)"><div style="position:absolute;left:1px;top:3px;width:5px;height:1px;background:#3b52a0"></div></div>
<div style="position:absolute;left:279px;top:288.24px;font-size:12px;line-height:12px;color:#6b6b6b;font-weight:bold;white-space:nowrap;transform:scaleX(0.955);transform-origin:0 0;word-spacing:1.5px">Filling Color</div>
<div style="position:absolute;left:471px;top:288.24px;font-size:12px;line-height:12px;color:#000;font-weight:normal;white-space:nowrap;transform:scaleX(0.85);transform-origin:0 0;word-spacing:1px">From Material</div>
<div style="position:absolute;left:467px;top:303px;width:225px;height:16px;background:#fff;"></div>
<div style="position:absolute;left:262px;top:306px;width:7px;height:7px;border:1px solid #9b9b9b;border-radius:2px;background:linear-gradient(#fcfcfc,#dcdcdc)"><div style="position:absolute;left:1px;top:3px;width:5px;height:1px;background:#3b52a0"></div></div>
<div style="position:absolute;left:279px;top:305.24px;font-size:12px;line-height:12px;color:#6b6b6b;font-weight:bold;white-space:nowrap;transform:scaleX(0.955);transform-origin:0 0;word-spacing:1.5px">Shield Color</div>
<div style="position:absolute;left:471px;top:305.24px;font-size:12px;line-height:12px;color:#000;font-weight:normal;white-space:nowrap;transform:scaleX(0.85);transform-origin:0 0;word-spacing:1px">From Material</div>
<div style="position:absolute;left:258px;top:320px;width:208px;height:16px;background:#fff;"></div>
<div style="position:absolute;left:467px;top:320px;width:225px;height:16px;background:#fff;"></div>
<div style="position:absolute;left:262px;top:322.24px;font-size:12px;line-height:12px;color:#000;font-weight:normal;white-space:nowrap;transform:scaleX(0.85);transform-origin:0 0;word-spacing:1px">Template</div>
<div style="position:absolute;left:471px;top:322.24px;font-size:12px;line-height:12px;color:#000;font-weight:normal;white-space:nowrap;transform:scaleX(0.85);transform-origin:0 0;word-spacing:1px">Braided_1</div>
<div style="position:absolute;left:258px;top:337px;width:208px;height:16px;background:#fff;"></div>
<div style="position:absolute;left:467px;top:337px;width:225px;height:16px;background:#fff;"></div>
<div style="position:absolute;left:262px;top:339.24px;font-size:12px;line-height:12px;color:#000;font-weight:normal;white-space:nowrap;transform:scaleX(0.85);transform-origin:0 0;word-spacing:1px">Type</div>
<div style="position:absolute;left:471px;top:339.24px;font-size:12px;line-height:12px;color:#000;font-weight:normal;white-space:nowrap;transform:scaleX(0.85);transform-origin:0 0;word-spacing:1px">Braided</div>
<div style="position:absolute;left:258px;top:354px;width:208px;height:16px;background:#fff;"></div>
<div style="position:absolute;left:467px;top:354px;width:225px;height:16px;background:#fff;"></div>
<div style="position:absolute;left:262px;top:356.24px;font-size:12px;line-height:12px;color:#000;font-weight:normal;white-space:nowrap;transform:scaleX(0.85);transform-origin:0 0;word-spacing:1px">Material</div>
<div style="position:absolute;left:471px;top:356.24px;font-size:12px;line-height:12px;color:#000;font-weight:normal;white-space:nowrap;transform:scaleX(0.85);transform-origin:0 0;word-spacing:1px">Copper</div>
<div style="position:absolute;left:258px;top:371px;width:208px;height:16px;background:#fff;"></div>
<div style="position:absolute;left:467px;top:371px;width:225px;height:16px;background:#fff;"></div>
<div style="position:absolute;left:262px;top:373.24px;font-size:12px;line-height:12px;color:#000;font-weight:normal;white-space:nowrap;transform:scaleX(0.85);transform-origin:0 0;word-spacing:1px">Filaments diameter</div>
<div style="position:absolute;left:471px;top:373.24px;font-size:12px;line-height:12px;color:#000;font-weight:normal;white-space:nowrap;transform:scaleX(0.85);transform-origin:0 0;word-spacing:1px">0.127</div>
<div style="position:absolute;left:258px;top:388px;width:208px;height:16px;background:#fff;"></div>
<div style="position:absolute;left:467px;top:388px;width:225px;height:16px;background:#fff;"></div>
<div style="position:absolute;left:262px;top:390.24px;font-size:12px;line-height:12px;color:#000;font-weight:normal;white-space:nowrap;transform:scaleX(0.85);transform-origin:0 0;word-spacing:1px">Filaments in carrier</div>
<div style="position:absolute;left:471px;top:390.24px;font-size:12px;line-height:12px;color:#000;font-weight:normal;white-space:nowrap;transform:scaleX(0.85);transform-origin:0 0;word-spacing:1px">7</div>
<div style="position:absolute;left:258px;top:405px;width:208px;height:16px;background:#fff;"></div>
<div style="position:absolute;left:467px;top:405px;width:225px;height:16px;background:#fff;"></div>
<div style="position:absolute;left:262px;top:407.24px;font-size:12px;line-height:12px;color:#000;font-weight:normal;white-space:nowrap;transform:scaleX(0.85);transform-origin:0 0;word-spacing:1px">Carriers in braid</div>
<div style="position:absolute;left:471px;top:407.24px;font-size:12px;line-height:12px;color:#000;font-weight:normal;white-space:nowrap;transform:scaleX(0.85);transform-origin:0 0;word-spacing:1px">16</div>
<div style="position:absolute;left:258px;top:422px;width:208px;height:16px;background:#fff;"></div>
<div style="position:absolute;left:467px;top:422px;width:225px;height:16px;background:#fff;"></div>
<div style="position:absolute;left:262px;top:424.24px;font-size:12px;line-height:12px;color:#000;font-weight:normal;white-space:nowrap;transform:scaleX(0.85);transform-origin:0 0;word-spacing:1px">Weave angle</div>
<div style="position:absolute;left:471px;top:424.24px;font-size:12px;line-height:12px;color:#000;font-weight:normal;white-space:nowrap;transform:scaleX(0.85);transform-origin:0 0;word-spacing:1px">29.5</div>
<div style="position:absolute;left:258px;top:439px;width:208px;height:16px;background:#fff;"></div>
<div style="position:absolute;left:467px;top:439px;width:225px;height:16px;background:#fff;"></div>
<div style="position:absolute;left:262px;top:441.24px;font-size:12px;line-height:12px;color:#000;font-weight:normal;white-space:nowrap;transform:scaleX(0.85);transform-origin:0 0;word-spacing:1px">Method</div>
<div style="position:absolute;left:471px;top:441.24px;font-size:12px;line-height:12px;color:#000;font-weight:normal;white-space:nowrap;transform:scaleX(0.85);transform-origin:0 0;word-spacing:1px">Tyni</div>
<div style="position:absolute;left:262px;top:459px;width:7px;height:7px;border:1px solid #9b9b9b;border-radius:2px;background:linear-gradient(#fcfcfc,#dcdcdc)"><div style="position:absolute;left:1px;top:3px;width:5px;height:1px;background:#3b52a0"></div><div style="position:absolute;left:3px;top:1px;width:1px;height:5px;background:#3b52a0"></div></div>
<div style="position:absolute;left:279px;top:458.24px;font-size:12px;line-height:12px;color:#6b6b6b;font-weight:bold;white-space:nowrap;transform:scaleX(0.955);transform-origin:0 0;word-spacing:1.5px">Shield Characteristics</div>
<div style="position:absolute;left:467px;top:473px;width:225px;height:16px;background:#fff;"></div>
<div style="position:absolute;left:245px;top:476px;width:7px;height:7px;border:1px solid #9b9b9b;border-radius:2px;background:linear-gradient(#fcfcfc,#dcdcdc)"><div style="position:absolute;left:1px;top:3px;width:5px;height:1px;background:#3b52a0"></div></div>
<div style="position:absolute;left:262px;top:475.24px;font-size:12px;line-height:12px;color:#6b6b6b;font-weight:bold;white-space:nowrap;transform:scaleX(0.955);transform-origin:0 0;word-spacing:1.5px">Outer Insulation</div>
<div style="position:absolute;left:471px;top:475.24px;font-size:12px;line-height:12px;color:#000;font-weight:normal;white-space:nowrap;transform:scaleX(0.85);transform-origin:0 0;word-spacing:1px">Yes</div>
<div style="position:absolute;left:258px;top:490px;width:208px;height:16px;background:#fff;"></div>
<div style="position:absolute;left:467px;top:490px;width:225px;height:16px;background:#fff;"></div>
<div style="position:absolute;left:262px;top:492.24px;font-size:12px;line-height:12px;color:#000;font-weight:normal;white-space:nowrap;transform:scaleX(0.85);transform-origin:0 0;word-spacing:1px">Material</div>
<div style="position:absolute;left:471px;top:492.24px;font-size:12px;line-height:12px;color:#000;font-weight:normal;white-space:nowrap;transform:scaleX(0.85);transform-origin:0 0;word-spacing:1px">PVC</div>
<div style="position:absolute;left:258px;top:507px;width:208px;height:16px;background:#fff;"></div>
<div style="position:absolute;left:467px;top:507px;width:225px;height:16px;background:#fff;"></div>
<div style="position:absolute;left:262px;top:509.24px;font-size:12px;line-height:12px;color:#000;font-weight:normal;white-space:nowrap;transform:scaleX(0.85);transform-origin:0 0;word-spacing:1px">Shape</div>
<div style="position:absolute;left:471px;top:509.24px;font-size:12px;line-height:12px;color:#000;font-weight:normal;white-space:nowrap;transform:scaleX(0.85);transform-origin:0 0;word-spacing:1px">Circle</div>
<div style="position:absolute;left:258px;top:524px;width:208px;height:16px;background:#fff;"></div>
<div style="position:absolute;left:467px;top:524px;width:225px;height:16px;background:#fff;"></div>
<div style="position:absolute;left:262px;top:526.24px;font-size:12px;line-height:12px;color:#000;font-weight:normal;white-space:nowrap;transform:scaleX(0.85);transform-origin:0 0;word-spacing:1px">Definition Type</div>
<div style="position:absolute;left:471px;top:526.24px;font-size:12px;line-height:12px;color:#000;font-weight:normal;white-space:nowrap;transform:scaleX(0.85);transform-origin:0 0;word-spacing:1px">Thickness</div>
<div style="position:absolute;left:258px;top:541px;width:208px;height:16px;background:#fff;"></div>
<div style="position:absolute;left:467px;top:541px;width:225px;height:16px;background:#fff;"></div>
<div style="position:absolute;left:262px;top:543.24px;font-size:12px;line-height:12px;color:#000;font-weight:normal;white-space:nowrap;transform:scaleX(0.85);transform-origin:0 0;word-spacing:1px">Thickness</div>
<div style="position:absolute;left:471px;top:543.24px;font-size:12px;line-height:12px;color:#000;font-weight:normal;white-space:nowrap;transform:scaleX(0.85);transform-origin:0 0;word-spacing:1px">0.5</div>
<div style="position:absolute;left:467px;top:558px;width:225px;height:16px;background:#fff;"></div>
<div style="position:absolute;left:262px;top:561px;width:7px;height:7px;border:1px solid #9b9b9b;border-radius:2px;background:linear-gradient(#fcfcfc,#dcdcdc)"><div style="position:absolute;left:1px;top:3px;width:5px;height:1px;background:#3b52a0"></div></div>
<div style="position:absolute;left:279px;top:560.24px;font-size:12px;line-height:12px;color:#6b6b6b;font-weight:bold;white-space:nowrap;transform:scaleX(0.955);transform-origin:0 0;word-spacing:1.5px">Color</div>
<div style="position:absolute;left:471px;top:560.24px;font-size:12px;line-height:12px;color:#000;font-weight:normal;white-space:nowrap;transform:scaleX(0.85);transform-origin:0 0;word-spacing:1px">From Material</div>
<div style="position:absolute;left:467px;top:575px;width:225px;height:16px;background:#fff;"></div>
<div style="position:absolute;left:245px;top:578px;width:7px;height:7px;border:1px solid #9b9b9b;border-radius:2px;background:linear-gradient(#fcfcfc,#dcdcdc)"><div style="position:absolute;left:1px;top:3px;width:5px;height:1px;background:#3b52a0"></div><div style="position:absolute;left:3px;top:1px;width:1px;height:5px;background:#3b52a0"></div></div>
<div style="position:absolute;left:262px;top:577.24px;font-size:12px;line-height:12px;color:#6b6b6b;font-weight:bold;white-space:nowrap;transform:scaleX(0.955);transform-origin:0 0;word-spacing:1.5px">Twisting</div>
<div style="position:absolute;left:471px;top:577.24px;font-size:12px;line-height:12px;color:#000;font-weight:normal;white-space:nowrap;transform:scaleX(0.85);transform-origin:0 0;word-spacing:1px">No</div>
<div style="position:absolute;left:245px;top:595px;width:7px;height:7px;border:1px solid #9b9b9b;border-radius:2px;background:linear-gradient(#fcfcfc,#dcdcdc)"><div style="position:absolute;left:1px;top:3px;width:5px;height:1px;background:#3b52a0"></div><div style="position:absolute;left:3px;top:1px;width:1px;height:5px;background:#3b52a0"></div></div>
<div style="position:absolute;left:262px;top:594.24px;font-size:12px;line-height:12px;color:#6b6b6b;font-weight:bold;white-space:nowrap;transform:scaleX(0.955);transform-origin:0 0;word-spacing:1.5px">1. PWR_Ground</div>
<div style="position:absolute;left:471px;top:594.24px;font-size:12px;line-height:12px;color:#000;font-weight:normal;white-space:nowrap;transform:scaleX(0.85);transform-origin:0 0;word-spacing:1px">Single</div>
<div style="position:absolute;left:245px;top:612px;width:7px;height:7px;border:1px solid #9b9b9b;border-radius:2px;background:linear-gradient(#fcfcfc,#dcdcdc)"><div style="position:absolute;left:1px;top:3px;width:5px;height:1px;background:#3b52a0"></div><div style="position:absolute;left:3px;top:1px;width:1px;height:5px;background:#3b52a0"></div></div>
<div style="position:absolute;left:262px;top:611.24px;font-size:12px;line-height:12px;color:#6b6b6b;font-weight:bold;white-space:nowrap;transform:scaleX(0.955);transform-origin:0 0;word-spacing:1.5px">2. PWR_Power</div>
<div style="position:absolute;left:471px;top:611.24px;font-size:12px;line-height:12px;color:#000;font-weight:normal;white-space:nowrap;transform:scaleX(0.85);transform-origin:0 0;word-spacing:1px">Single</div>
<div style="position:absolute;left:245px;top:629px;width:7px;height:7px;border:1px solid #9b9b9b;border-radius:2px;background:linear-gradient(#fcfcfc,#dcdcdc)"><div style="position:absolute;left:1px;top:3px;width:5px;height:1px;background:#3b52a0"></div><div style="position:absolute;left:3px;top:1px;width:1px;height:5px;background:#3b52a0"></div></div>
<div style="position:absolute;left:262px;top:628.24px;font-size:12px;line-height:12px;color:#6b6b6b;font-weight:bold;white-space:nowrap;transform:scaleX(0.955);transform-origin:0 0;word-spacing:1.5px">3. UTWP</div>
<div style="position:absolute;left:471px;top:628.24px;font-size:12px;line-height:12px;color:#000;font-weight:normal;white-space:nowrap;transform:scaleX(0.85);transform-origin:0 0;word-spacing:1px">Twisted</div>
<div style="position:absolute;left:245px;top:646px;width:7px;height:7px;border:1px solid #9b9b9b;border-radius:2px;background:linear-gradient(#fcfcfc,#dcdcdc)"><div style="position:absolute;left:1px;top:3px;width:5px;height:1px;background:#3b52a0"></div><div style="position:absolute;left:3px;top:1px;width:1px;height:5px;background:#3b52a0"></div></div>
<div style="position:absolute;left:262px;top:645.24px;font-size:12px;line-height:12px;color:#6b6b6b;font-weight:bold;white-space:nowrap;transform:scaleX(0.955);transform-origin:0 0;word-spacing:1.5px">4. Multi_STP_1</div>
<div style="position:absolute;left:471px;top:645.24px;font-size:12px;line-height:12px;color:#000;font-weight:normal;white-space:nowrap;transform:scaleX(0.85);transform-origin:0 0;word-spacing:1px">Multi</div>
<div style="position:absolute;left:245px;top:663px;width:7px;height:7px;border:1px solid #9b9b9b;border-radius:2px;background:linear-gradient(#fcfcfc,#dcdcdc)"><div style="position:absolute;left:1px;top:3px;width:5px;height:1px;background:#3b52a0"></div><div style="position:absolute;left:3px;top:1px;width:1px;height:5px;background:#3b52a0"></div></div>
<div style="position:absolute;left:262px;top:662.24px;font-size:12px;line-height:12px;color:#6b6b6b;font-weight:bold;white-space:nowrap;transform:scaleX(0.955);transform-origin:0 0;word-spacing:1.5px">5. Multi_STP_2</div>
<div style="position:absolute;left:471px;top:662.24px;font-size:12px;line-height:12px;color:#000;font-weight:normal;white-space:nowrap;transform:scaleX(0.85);transform-origin:0 0;word-spacing:1px">Multi</div>
<div style="position:absolute;left:466px;top:677px;width:1px;height:18px;background:#ececec;"></div>
<div style="position:absolute;left:621px;top:719px;width:20px;height:19px;border:1px solid #adadad;background:#e1e1e1"></div>
<div style="position:absolute;left:627px;top:237px;width:525px;height:587px;background:#e6e6e6;"></div>
<div style="position:absolute;left:628px;top:238px;width:524px;height:586px;background:#fafafa;"></div>
<div style="position:absolute;left:1150px;top:238px;width:2px;height:586px;background:#5c5c5c;"></div>
<div style="position:absolute;left:627px;top:822px;width:525px;height:2px;background:#5c5c5c;"></div>
<div style="position:absolute;left:630px;top:240px;width:518px;height:582px;background:#f0f0f0;"></div>
<div style="position:absolute;left:631px;top:241px;width:517px;height:23px;background:#98b2d1;"></div>
<div style="position:absolute;left:633px;top:248.09px;font-size:11px;line-height:11px;color:#000;font-weight:bold;white-space:nowrap;transform:scaleX(0.99);transform-origin:0 0;">Viewer 2D</div>
<svg style="position:absolute;left:1135px;top:248px" width="10" height="9" viewBox="0 0 10 9"><path d="M1 1L9 8M9 1L1 8" stroke="#000" stroke-width="1.8"/></svg>
<div style="position:absolute;left:631px;top:264px;width:517px;height:28px;background:linear-gradient(#f6f8fc 0%,#eef2fa 30%,#cfd0dc 75%,#b3b5c9 100%);"></div>
<div style="position:absolute;left:633px;top:265px;width:24px;height:24px;border:1px solid #3c8cdc;background:#cfe2f5"></div>
<div style="position:absolute;left:741px;top:268px;width:1px;height:20px;background:#c4c4cc;"></div>
<svg style="position:absolute;left:638px;top:267px" width="16" height="22" viewBox="0 0 16 22"><path d="M2 1.5v16l4-4 3.5 7 3-1.5-3.5-6.5h5.5z" fill="#a4c0e6" stroke="#000" stroke-width="1.1" stroke-linejoin="round"/></svg>
<svg style="position:absolute;left:661px;top:267px" width="22" height="22" viewBox="0 0 22 22"><path d="M11 1L21 11 11 21 1 11z" fill="#a8c6ec" stroke="#000" stroke-width="1"/><rect x="5.5" y="6.5" width="3.6" height="3.6" fill="#fff" stroke="#000" stroke-width="0.9"/><rect x="12.9" y="6.5" width="3.6" height="3.6" fill="#fff" stroke="#000" stroke-width="0.9"/><rect x="5.5" y="13.5" width="3.6" height="3.6" fill="#fff" stroke="#000" stroke-width="0.9"/><rect x="12.9" y="13.5" width="3.6" height="3.6" fill="#fff" stroke="#000" stroke-width="0.9"/></svg>
<svg style="position:absolute;left:687px;top:267px" width="21" height="21" viewBox="0 0 21 21"><path d="M12.5 12.5L19 19" stroke="#000" stroke-width="2.6" stroke-linecap="round"/><circle cx="7.5" cy="7.5" r="6.3" fill="#dce8f8" stroke="#000" stroke-width="1.1"/></svg>
<svg style="position:absolute;left:713px;top:267px" width="21" height="21" viewBox="0 0 21 21"><path d="M12.5 12.5L19 19" stroke="#000" stroke-width="2.6" stroke-linecap="round"/><circle cx="7.5" cy="7.5" r="6.3" fill="#dce8f8" stroke="#000" stroke-width="1.1"/><rect x="6.5" y="6.5" width="13" height="13" fill="none" stroke="#4a78b8" stroke-width="1"/></svg>
<svg style="position:absolute;left:747px;top:267px" width="21" height="21" viewBox="0 0 21 21"><path d="M12.5 12.5L19 19" stroke="#000" stroke-width="2.6" stroke-linecap="round"/><circle cx="7.5" cy="7.5" r="6.3" fill="#dce8f8" stroke="#000" stroke-width="1.1"/><path d="M7.5 4v7M4 7.5h7" stroke="#4a78b8" stroke-width="1.8"/></svg>
<svg style="position:absolute;left:773px;top:267px" width="21" height="21" viewBox="0 0 21 21"><path d="M12.5 12.5L19 19" stroke="#000" stroke-width="2.6" stroke-linecap="round"/><circle cx="7.5" cy="7.5" r="6.3" fill="#dce8f8" stroke="#000" stroke-width="1.1"/><path d="M4 7.5h7" stroke="#4a78b8" stroke-width="1.8"/></svg>
<svg style="position:absolute;left:799px;top:267px" width="21" height="21" viewBox="0 0 21 21"><path d="M12.5 12.5L19 19" stroke="#000" stroke-width="2.6" stroke-linecap="round"/><circle cx="7.5" cy="7.5" r="6.3" fill="#dce8f8" stroke="#000" stroke-width="1.1"/><rect x="4" y="4" width="7" height="7" fill="none" stroke="#4a78b8" stroke-width="1.2"/></svg>
<div style="position:absolute;left:631px;top:294.24px;font-size:12px;line-height:12px;color:#000;font-weight:normal;white-space:nowrap;transform:scaleX(0.972);transform-origin:0 0;">Visualization mode: Cables Library</div>
<div style="position:absolute;left:631px;top:307px;width:515px;height:496px;border:1px solid #606060;background:#fff"></div>
<svg style="position:absolute;left:0;top:0" width="1152" height="824" viewBox="0 0 1152 824"><rect x="660.5" y="308.5" width="486" height="481" fill="none" stroke="#606060" stroke-width="1"/><line x1="703.5" y1="308" x2="703.5" y2="789" stroke="#555" stroke-width="1" stroke-dasharray="3 3"/><line x1="753.5" y1="308" x2="753.5" y2="789" stroke="#555" stroke-width="1" stroke-dasharray="3 3"/><line x1="803.5" y1="308" x2="803.5" y2="789" stroke="#555" stroke-width="1" stroke-dasharray="3 3"/><line x1="853.5" y1="308" x2="853.5" y2="789" stroke="#555" stroke-width="1" stroke-dasharray="3 3"/><line x1="903.5" y1="308" x2="903.5" y2="789" stroke="#555" stroke-width="1" stroke-dasharray="3 3"/><line x1="953.5" y1="308" x2="953.5" y2="789" stroke="#555" stroke-width="1" stroke-dasharray="3 3"/><line x1="1003.5" y1="308" x2="1003.5" y2="789" stroke="#555" stroke-width="1" stroke-dasharray="3 3"/><line x1="1053.5" y1="308" x2="1053.5" y2="789" stroke="#555" stroke-width="1" stroke-dasharray="3 3"/><line x1="1103.5" y1="308" x2="1103.5" y2="789" stroke="#555" stroke-width="1" stroke-dasharray="3 3"/><line x1="660" y1="349.5" x2="1146" y2="349.5" stroke="#555" stroke-width="1" stroke-dasharray="3 3"/><line x1="660" y1="399.5" x2="1146" y2="399.5" stroke="#555" stroke-width="1" stroke-dasharray="3 3"/><line x1="660" y1="449.5" x2="1146" y2="449.5" stroke="#555" stroke-width="1" stroke-dasharray="3 3"/><line x1="660" y1="499.5" x2="1146" y2="499.5" stroke="#555" stroke-width="1" stroke-dasharray="3 3"/><line x1="660" y1="549.5" x2="1146" y2="549.5" stroke="#555" stroke-width="1" stroke-dasharray="3 3"/><line x1="660" y1="599.5" x2="1146" y2="599.5" stroke="#555" stroke-width="1" stroke-dasharray="3 3"/><line x1="660" y1="649.5" x2="1146" y2="649.5" stroke="#555" stroke-width="1" stroke-dasharray="3 3"/><line x1="660" y1="699.5" x2="1146" y2="699.5" stroke="#555" stroke-width="1" stroke-dasharray="3 3"/><line x1="660" y1="749.5" x2="1146" y2="749.5" stroke="#555" stroke-width="1" stroke-dasharray="3 3"/><text x="703.5" y="800" text-anchor="middle" font-family="Liberation Sans" font-weight="bold" font-size="11" fill="#454545">-2.6</text><text x="753.5" y="800" text-anchor="middle" font-family="Liberation Sans" font-weight="bold" font-size="11" fill="#454545">-1.9</text><text x="803.5" y="800" text-anchor="middle" font-family="Liberation Sans" font-weight="bold" font-size="11" fill="#454545">-1.3</text><text x="853.5" y="800" text-anchor="middle" font-family="Liberation Sans" font-weight="bold" font-size="11" fill="#454545">-0.6</text><text x="903.5" y="800" text-anchor="middle" font-family="Liberation Sans" font-weight="bold" font-size="11" fill="#454545">0.0</text><text x="953.5" y="800" text-anchor="middle" font-family="Liberation Sans" font-weight="bold" font-size="11" fill="#454545">0.6</text><text x="1003.5" y="800" text-anchor="middle" font-family="Liberation Sans" font-weight="bold" font-size="11" fill="#454545">1.3</text><text x="1053.5" y="800" text-anchor="middle" font-family="Liberation Sans" font-weight="bold" font-size="11" fill="#454545">1.9</text><text x="1103.5" y="800" text-anchor="middle" font-family="Liberation Sans" font-weight="bold" font-size="11" fill="#454545">2.6</text><text x="632" y="349" font-family="Liberation Sans" font-weight="bold" font-size="11" fill="#454545">2.6</text><text x="632" y="399" font-family="Liberation Sans" font-weight="bold" font-size="11" fill="#454545">1.9</text><text x="632" y="449" font-family="Liberation Sans" font-weight="bold" font-size="11" fill="#454545">1.3</text><text x="632" y="499" font-family="Liberation Sans" font-weight="bold" font-size="11" fill="#454545">0.6</text><text x="632" y="549" font-family="Liberation Sans" font-weight="bold" font-size="11" fill="#454545">0.0</text><text x="632" y="599" font-family="Liberation Sans" font-weight="bold" font-size="11" fill="#454545">-0.6</text><text x="632" y="649" font-family="Liberation Sans" font-weight="bold" font-size="11" fill="#454545">-1.3</text><text x="632" y="699" font-family="Liberation Sans" font-weight="bold" font-size="11" fill="#454545">-1.9</text><text x="632" y="749" font-family="Liberation Sans" font-weight="bold" font-size="11" fill="#454545">-2.6</text><g shape-rendering="crispEdges"><circle cx="903" cy="549" r="205.5" fill="#00c000" stroke="#000" stroke-width="1"/><circle cx="903" cy="549" r="167" fill="#ff5500" stroke="#000" stroke-width="1"/><circle cx="903" cy="549" r="147" fill="#00c000" stroke="#000" stroke-width="1"/><circle cx="841.5" cy="494.5" r="38.5" fill="#ff0000" stroke="#000" stroke-width="1"/><circle cx="841" cy="495" r="18.5" fill="#ff5500" stroke="#000" stroke-width="1"/><circle cx="903" cy="549" r="38.5" fill="#000" stroke="#000" stroke-width="1"/><circle cx="903" cy="549" r="18" fill="#ff5500" stroke="#000" stroke-width="1"/><circle cx="926" cy="471.5" r="38.7" fill="none" stroke="#e02020" stroke-width="1" stroke-dasharray="15 7"/><circle cx="906" cy="471.5" r="18.3" fill="#007300" stroke="#000" stroke-width="1"/><circle cx="906" cy="471.5" r="8.5" fill="#ff5500" stroke="#000" stroke-width="1"/><circle cx="946" cy="471.5" r="18.3" fill="#007300" stroke="#000" stroke-width="1"/><circle cx="946" cy="471.5" r="8.5" fill="#ff5500" stroke="#000" stroke-width="1"/><circle cx="810" cy="580.4" r="49" fill="none" stroke="#000" stroke-width="1.3"/><circle cx="810" cy="580.4" r="47.8" fill="none" stroke="#e02020" stroke-width="1" stroke-dasharray="8 3"/><circle cx="785" cy="580" r="21.5" fill="#800080" stroke="#000" stroke-width="1"/><circle cx="785" cy="580" r="11.3" fill="#ff5500" stroke="#000" stroke-width="1"/><circle cx="835" cy="580" r="21.5" fill="#800080" stroke="#000" stroke-width="1"/><circle cx="835" cy="580" r="11.3" fill="#ff5500" stroke="#000" stroke-width="1"/><circle cx="996" cy="569.4" r="48.8" fill="none" stroke="#000" stroke-width="1.3"/><circle cx="996" cy="569.4" r="47.6" fill="none" stroke="#e02020" stroke-width="1" stroke-dasharray="8 3"/><circle cx="971" cy="569" r="21" fill="#ffff00" stroke="#000" stroke-width="1"/><circle cx="971" cy="569" r="11.3" fill="#ff5500" stroke="#000" stroke-width="1"/><circle cx="1021" cy="569" r="21" fill="#ffff00" stroke="#000" stroke-width="1"/><circle cx="1021" cy="569" r="11.3" fill="#ff5500" stroke="#000" stroke-width="1"/></g></svg>
</body></html>
